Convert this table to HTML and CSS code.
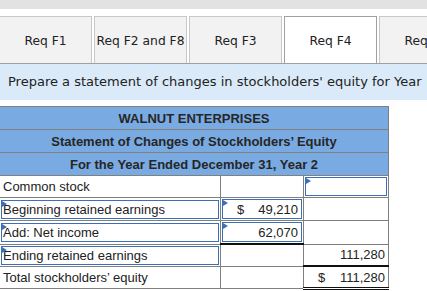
FILE: index.html
```html
<!DOCTYPE html>
<html>
<head>
<meta charset="utf-8">
<link rel="stylesheet" href="styles.css">
</head>
<body>
<div class="topbar"></div>
<div class="tabs">
  <div class="tab">Req F1</div>
  <div class="tab">Req F2 and F8</div>
  <div class="tab">Req F3</div>
  <div class="tab active">Req F4</div>
  <div class="tab">Req F5</div>
</div>
<div class="prompt">Prepare a statement of changes in stockholders' equity for Year 2.</div>
<table class="stmt">
  <colgroup><col class="c1"><col class="c2"><col class="c3"></colgroup>
  <tr class="hd"><th colspan="3">WALNUT ENTERPRISES</th></tr>
  <tr class="hd"><th colspan="3">Statement of Changes of Stockholders’ Equity</th></tr>
  <tr class="hd"><th colspan="3">For the Year Ended December 31, Year 2</th></tr>
  <tr>
    <td><div class="lbl">Common stock</div></td>
    <td></td>
    <td class="pad"><div class="inp"></div></td>
  </tr>
  <tr>
    <td class="pad"><div class="inp lbl">Beginning retained earnings</div></td>
    <td class="pad"><div class="inp amt"><span class="cur">$</span><span>49,210</span></div></td>
    <td></td>
  </tr>
  <tr>
    <td class="pad"><div class="inp lbl">Add: Net income</div></td>
    <td class="pad"><div class="inp amt"><span class="cur"></span><span>62,070</span></div></td>
    <td></td>
  </tr>
  <tr>
    <td class="pad"><div class="inp lbl">Ending retained earnings</div></td>
    <td class="single"></td>
    <td><div class="amt"><span class="cur"></span><span>111,280</span></div></td>
  </tr>
  <tr class="last">
    <td><div class="lbl">Total stockholders’ equity</div></td>
    <td></td>
    <td class="single double"><div class="amt"><span class="cur">$</span><span>111,280</span></div></td>
  </tr>
</table>
</body>
</html>
```
FILE: styles.css
```css
html, body {
  margin: 0;
  padding: 0;
  background: #ffffff;
  overflow: hidden;
}
body {
  width: 427px;
  height: 291px;
}
.topbar {
  height: 9px;
  background: #e2e2e2;
}
.tabs {
  display: flex;
  gap: 2px;
  margin-top: 7px;
  margin-left: -1px;
  border-bottom: 1px solid #a0a0a0;
  height: 47px;
  white-space: nowrap;
  overflow: hidden;
}
.tab {
  flex: 0 0 auto;
  box-sizing: border-box;
  width: 93px;
  height: 48px;
  background: #f2f2f2;
  border: 1px solid #c8c8c8;
  border-bottom: none;
  font-family: "DejaVu Sans", Verdana, sans-serif;
  font-size: 12.3px;
  color: #222;
  display: flex;
  align-items: center;
  justify-content: center;
}
.tab.active {
  background: #ffffff;
  border-color: #a0a0a0;
}
.prompt {
  background: #dbeaf8;
  height: 36px;
  line-height: 36px;
  padding-left: 8px;
  padding-right: 3px;
  width: 427px;
  box-sizing: border-box;
  overflow: hidden;
  font-family: "DejaVu Sans", Verdana, sans-serif;
  font-size: 13px;
  color: #222;
}
.stmt {
  margin-top: 6px;
  margin-left: -1px;
  border-collapse: collapse;
  table-layout: fixed;
  width: 389px;
  font-family: "Liberation Sans", Arial, sans-serif;
  font-size: 13px;
  color: #222;
}
.c1 { width: 221px; }
.c2 { width: 83px; }
.c3 { width: 85px; }
.stmt th {
  background: #7aaae2;
  border: 1px solid #808080;
  height: 22px;
  padding: 0;
  font-weight: bold;
  font-size: 13px;
  color: #262626;
  text-align: center;
}
.stmt td {
  border: 1px solid #808080;
  height: 22px;
  padding: 0;
  box-sizing: border-box;
}
.stmt tr.last td { height: 21px; }
.stmt td.pad {
  padding: 1px;
  height: 22px;
}
.inp {
  box-sizing: border-box;
  height: 19px;
  border: 1.5px solid #3d6fb6;
  position: relative;
}
.inp::before {
  content: "";
  position: absolute;
  left: 0;
  top: 0;
  border-top: 3px solid transparent;
  border-bottom: 3px solid transparent;
  border-left: 5px solid #3d6fb6;
}
.lbl {
  padding-left: 3px;
  line-height: 17px;
  white-space: nowrap;
}
.stmt td.pad .lbl { padding-left: 1px; }
.amt {
  display: flex;
  justify-content: space-between;
  align-items: center;
  height: 100%;
  line-height: 17px;
  padding: 0 2px 0 9px;
  box-sizing: border-box;
}
.stmt td > .amt { height: 20px; padding-right: 3px; padding-left: 14px; }
.stmt td.single { border-top: 2px solid #111; }
.stmt td.double { border-bottom: 3px double #111; }
```
